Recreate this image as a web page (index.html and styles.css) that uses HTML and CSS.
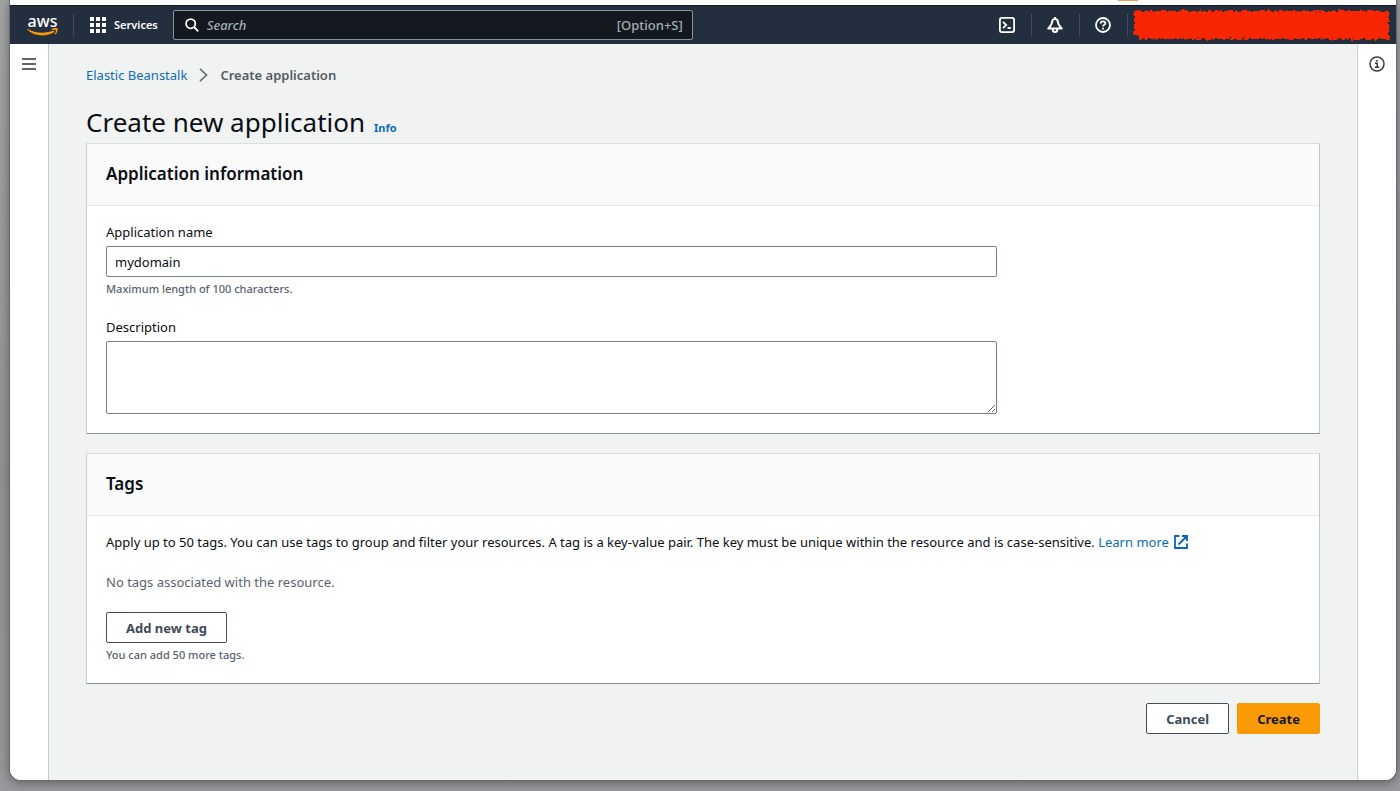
FILE: index.html
```html
<!DOCTYPE html>
<html lang="en">
<head>
<meta charset="utf-8">
<meta name="viewport" content="width=device-width, initial-scale=1">
<title>Create application - Elastic Beanstalk</title>
<link rel="stylesheet" href="styles.css">
</head>
<body>
<div class="window">
  <div class="browser-edge"><span class="browser-edge-accent"></span></div>
  <header class="topnav">
    <a class="logo" href="#" aria-label="AWS home">
      <span class="logo-text">aws</span>
      <svg class="logo-smile" viewBox="0 0 31 9" aria-hidden="true">
        <path d="M.3 1C8 5.200 18 5.800 26.500 2.600L27.500 4C19 9.300 7 8.500 0 1.600z" fill="#f90"/>
        <path d="M24.500 1.100C26.500-.2 30-.1 30.600.6c.5.800-.3 4.600-2.400 6.200l-.5-.3C28.500 4.800 29.200 2.700 28.900 2.200 28.500 1.700 26.300 1.700 24.600 1.700z" fill="#f90"/>
      </svg>
    </a>
    <span class="divider"></span>
    <button class="services" type="button">
      <svg width="16" height="16" viewBox="0 0 16 16" fill="#fff" aria-hidden="true">
        <path d="M0 0h4v4H0zM6 0h4v4H6zM12 0h4v4h-4zM0 6h4v4H0zM6 6h4v4H6zM12 6h4v4h-4zM0 12h4v4H0zM6 12h4v4H6zM12 12h4v4h-4z"/>
      </svg>
      Services
    </button>
    <label class="search">
      <svg width="14" height="14" viewBox="0 0 14 14" fill="none" stroke="#fff" stroke-width="1.800" aria-hidden="true">
        <circle cx="5.700" cy="5.700" r="4.600"/><path d="M9 9l4.300 4.300"/>
      </svg>
      <input class="search-input" type="search" placeholder="Search" aria-label="Search">
      <span class="search-hint">[Option+S]</span>
    </label>
    <div class="tools">
      <button class="tool" type="button" aria-label="CloudShell">
        <svg width="16" height="16" viewBox="0 0 16 16" fill="none" stroke="#fff" stroke-width="1.800" aria-hidden="true">
          <rect x=".9" y=".9" width="14.200" height="14.200" rx="2"/><path d="M4 4.800L7.200 8 4 11.200M8.600 11h3.200"/>
        </svg>
      </button>
      <span class="divider"></span>
      <button class="tool" type="button" aria-label="Notifications">
        <svg width="16" height="16" viewBox="0 0 16 16" fill="none" stroke="#fff" stroke-width="2" stroke-linejoin="round" aria-hidden="true">
          <path d="M8 1.800C6.200 2 5.200 3.400 5 5.400 4.800 7.600 3.500 9 1.300 11.400h13.400C12.500 9 11.200 7.600 11 5.400 10.800 3.400 9.800 2 8 1.800zM5.800 12v.8a2.200 2.200 0 0 0 4.400 0V12M8 0v2"/>
        </svg>
      </button>
      <span class="divider"></span>
      <button class="tool" type="button" aria-label="Help">
        <svg width="16" height="16" viewBox="0 0 16 16" fill="none" stroke="#fff" stroke-width="1.800" aria-hidden="true">
          <circle cx="8" cy="8" r="7"/><path d="M5.700 6.600C5.700 3.600 10.300 3.700 10.300 6.200 10.300 7.900 8 7.700 8 9.600M8 10.700v1.800"/>
        </svg>
      </button>
      <span class="divider"></span>
    </div>
    <svg class="account-mask" preserveAspectRatio="none" viewBox="0 0 258 32" aria-hidden="true">
      <filter id="rough" x="-2%" y="-10%" width="104%" height="120%">
        <feTurbulence type="fractalNoise" baseFrequency=".3" numOctaves="3" seed="4"/>
        <feDisplacementMap in="SourceGraphic" scale="6" xChannelSelector="R" yChannelSelector="G"/>
      </filter>
      <path d="M2 2H257V30H8L5 26H2z" fill="#f72803" filter="url(#rough)"/>
    </svg>
  </header>
  <div class="layout">
    <aside class="rail rail-left">
      <button class="rail-button" type="button" aria-label="Open navigation">
        <svg width="14" height="12" viewBox="0 0 14 12" stroke="#2c3442" stroke-width="1.500" aria-hidden="true"><path d="M0 1h14M0 6h14M0 11h14"/></svg>
      </button>
    </aside>
    <main class="content">
      <nav class="breadcrumb" aria-label="Breadcrumb">
        <a class="link" href="#">Elastic Beanstalk</a>
        <svg width="9" height="14" viewBox="0 0 9 14" fill="none" stroke="#687078" stroke-width="1.700" aria-hidden="true"><path d="M1 .8L7.500 7 1 13.200"/></svg>
        <span class="breadcrumb-current">Create application</span>
      </nav>
      <div class="title-row">
        <h1 class="title">Create new application</h1>
        <a class="link info" href="#">Info</a>
      </div>
      <form class="form">
        <section class="card">
          <h2 class="card-header">Application information</h2>
          <div class="card-body fields">
            <div class="field">
              <label class="label" for="app-name">Application name</label>
              <input class="control" id="app-name" type="text" value="mydomain" aria-describedby="name-hint">
              <p class="hint" id="name-hint">Maximum length of 100 characters.</p>
            </div>
            <div class="field">
              <label class="label" for="description">Description</label>
              <textarea class="control control-area" id="description"></textarea>
            </div>
          </div>
        </section>
        <section class="card">
          <h2 class="card-header">Tags</h2>
          <div class="card-body tags">
            <p class="text">Apply up to 50 tags. You can use tags to group and filter your resources. A tag is a key-value pair. The key must be unique within the resource and is case-sensitive. <a class="link" href="#">Learn more<svg class="external" width="14" height="14" viewBox="0 0 14 14" fill="none" stroke="#0a63bd" stroke-width="1.800" aria-hidden="true"><path d="M5.500 1H1v12h12V8.500M8 1h5v5M13 1L4.500 9.500"/></svg></a></p>
            <p class="text text-muted">No tags associated with the resource.</p>
            <div class="tag-action">
              <button class="button" type="button">Add new tag</button>
              <p class="hint">You can add 50 more tags.</p>
            </div>
          </div>
        </section>
        <div class="actions">
          <button class="button" type="button">Cancel</button>
          <button class="button button-primary" type="submit">Create</button>
        </div>
      </form>
    </main>
    <aside class="rail rail-right">
      <button class="rail-button" type="button" aria-label="Open info panel">
        <svg width="16" height="16" viewBox="0 0 16 16" fill="none" stroke="#353c48" stroke-width="1.500" aria-hidden="true"><circle cx="8" cy="8" r="7"/><path d="M6 7.200h2.200v4M5.800 11.300h4.500M7 4.700h1.800"/></svg>
      </button>
    </aside>
  </div>
</div>
</body>
</html>
```
FILE: styles.css
```css
* {
  box-sizing: border-box;
}

body {
  margin: 0;
  min-height: 100vh;
  display: flex;
  padding: 0 4px 11px 10px;
  background: linear-gradient(#a5a5a8, #939397 60%, #98989d);
  color: #0a0e14;
  font-family: "Noto Sans", "Open Sans", sans-serif;
  font-size: 13px;
  font-weight: 400;
  line-height: 20px;
}

button,
input,
textarea {
  font: inherit;
  color: inherit;
}

h1,
h2,
p {
  margin: 0;
}

.window {
  flex: 1;
  min-width: 0;
  display: flex;
  flex-direction: column;
  overflow: hidden;
  border-radius: 0 0 11px 11px;
  background: #fff;
  box-shadow: 0 0 0 1px #69696c, 0 2px 12px #55555a;
}

.browser-edge {
  display: flex;
  justify-content: flex-end;
  height: 5px;
  padding-right: 258px;
  background: #fdfdfd;
}

.browser-edge-accent {
  width: 20px;
  height: 1px;
  background: #f0a24a;
}

.topnav {
  display: flex;
  align-items: center;
  height: 39px;
  padding: 0 6px 0 17px;
  border-top: 1px solid #0e1a26;
  background: #232f3e;
  color: #fff;
}

.logo {
  display: flex;
  flex-direction: column;
  align-items: center;
  width: 31px;
  color: #fff;
  text-decoration: none;
}

.logo-text {
  font-size: 16px;
  font-weight: 500;
  line-height: 14px;
}

.logo-smile {
  width: 31px;
  height: 9px;
}

.divider {
  width: 1px;
  height: 22px;
  background: #414c5b;
}

.logo + .divider {
  margin: 0 16px 0 15px;
}

.services {
  display: flex;
  align-items: center;
  gap: 8px;
  padding: 0;
  border: 0;
  background: none;
  font-size: 11px;
  font-weight: 600;
}

.search {
  flex: 0 1 520px;
  min-width: 0;
  display: flex;
  align-items: center;
  gap: 8px;
  height: 30px;
  margin-left: 15px;
  padding: 0 9px 0 11px;
  border: 1px solid #87959a;
  border-radius: 2px;
  background: #14181f;
}

.search-input {
  flex: 1;
  min-width: 0;
  padding: 0;
  border: 0;
  outline: 0;
  background: none;
  color: #fff;
}

.search-input::placeholder {
  color: #a3b0b3;
  font-style: italic;
  font-weight: 500;
  opacity: 1;
}

.search-hint {
  color: #a3b0b3;
  font-weight: 500;
}

.tools {
  display: flex;
  align-items: center;
  margin-left: auto;
}

.tool,
.rail-button {
  display: flex;
  padding: 0;
  border: 0;
  background: none;
}

.tool {
  padding: 0 16px 0 15px;
}

.account-mask {
  flex: 0 1 258px;
  min-width: 0;
  height: 32px;
  margin-left: 4px;
}

.layout {
  flex: 1;
  display: flex;
}

.rail {
  flex: 0 0 39px;
  display: flex;
  flex-direction: column;
  align-items: center;
  background: #fff;
}

.rail-left {
  padding-top: 14px;
  border-right: 1px solid #c3cbd0;
}

.rail-right {
  padding-top: 12px;
  border-left: 1px solid #ccd2d4;
}

.content {
  flex: 1;
  min-width: 0;
  padding: 21px 37px 40px;
  background: #f1f3f3;
}

.link {
  color: #0b6cbc;
  text-decoration: none;
}

.breadcrumb {
  display: flex;
  align-items: center;
  gap: 12px;
}

.breadcrumb-current {
  color: #545b64;
  font-weight: 600;
}

.title-row {
  display: flex;
  align-items: baseline;
  gap: 9px;
  margin-top: 19px;
}

.title {
  font-size: 26px;
  font-weight: 400;
  line-height: 36px;
}

.info {
  font-size: 11px;
  font-weight: 700;
}

.form {
  display: flex;
  flex-direction: column;
  gap: 19px;
  margin-top: 3px;
}

.card {
  border: 1px solid #dadfe0;
  border-right-color: #c0c7ca;
  border-bottom-color: #879196;
  border-left-color: #c9d0d3;
  background: #fff;
}

.card-header {
  padding: 18px 19px 19px;
  border-bottom: 1px solid #e4e8e8;
  background: #fafafa;
  font-size: 17px;
  font-weight: 600;
  line-height: 24px;
}

.card-body {
  display: flex;
  flex-direction: column;
  padding: 16px 19px 19px;
}

.fields {
  gap: 19px;
}

.field {
  display: flex;
  flex-direction: column;
  width: 75%;
  padding-right: 5px;
}

.control {
  width: 100%;
  height: 31px;
  margin-top: 4px;
  padding: 4px 8px;
  border: 1px solid #738183;
  border-radius: 2px;
  background: #fff;
}

.control-area {
  height: 73px;
  resize: vertical;
}

.hint {
  margin-top: 3px;
  color: #596370;
  font-size: 11px;
  font-weight: 500;
  line-height: 18px;
}

.tags {
  gap: 20px;
}

.text-muted {
  color: #596370;
}

.external {
  margin-left: 5px;
  vertical-align: -2px;
}

.button {
  height: 31px;
  padding: 0 19px;
  border: 1px solid #454d5a;
  border-radius: 2px;
  background: #fff;
  color: #414a57;
  font-weight: 700;
}

.button-primary {
  border-color: #fa9a05;
  background: #fa9a05;
  color: #16191f;
}

.actions {
  display: flex;
  justify-content: flex-end;
  gap: 8px;
}
```
